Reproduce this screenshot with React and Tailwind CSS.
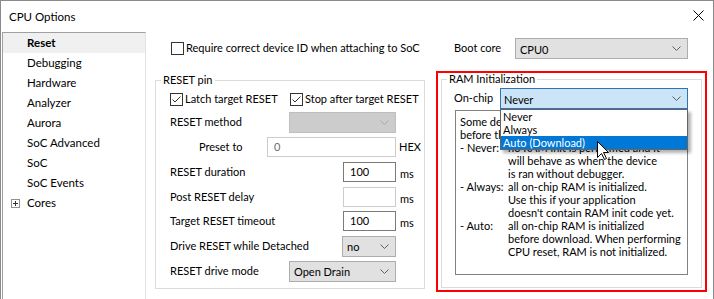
import React from "react";

const font = "font-['Lato','Liberation_Sans',sans-serif]";

const Chevron = ({ color = "#606060" }) => (
  <svg width="9" height="5" viewBox="0 0 9 5" className="shrink-0">
    <path d="M0.5 0.5 L4.5 4.5 L8.5 0.5" fill="none" stroke={color} strokeWidth="1" />
  </svg>
);

const CheckBox = ({ checked }) => (
  <div className="w-[13px] h-[13px] border border-[#333333] bg-white shrink-0 flex items-center justify-center">
    {checked && (
      <svg width="11" height="11" viewBox="0 0 11 11">
        <path d="M1.5 5.5 L4 8 L9.5 2.5" fill="none" stroke="#333333" strokeWidth="1" />
      </svg>
    )}
  </div>
);

const Combo = ({ value, className, disabled }) => (
  <div
    className={`h-[21px] flex items-center justify-between pl-[4px] pr-[6px] border ${
      disabled ? "bg-[#cccccc] border-[#bfbfbf]" : "bg-[#e1e1e1] border-[#adadad]"
    } ${className}`}
  >
    <span className="leading-[19px] pt-[1px]">{value}</span>
    <Chevron color={disabled ? "#a8a8a8" : "#606060"} />
  </div>
);

const Edit = ({ value, className, disabled, dim }) => (
  <div
    className={`h-[20px] flex items-center pl-[6px] border bg-white ${
      disabled ? "border-[#cccccc]" : "border-[#7a7a7a]"
    } ${dim ? "text-[#6d6d6d]" : ""} ${className}`}
  >
    {value}
  </div>
);

const treeItems = ["Reset", "Debugging", "Hardware", "Analyzer", "Aurora", "SoC Advanced", "SoC", "SoC Events"];

const helpLines = [
  ["", "Some devices require RAM to be"],
  ["", "before they can be used by the"],
  ["- Never:", "no RAM init is performed and it"],
  ["", "will behave as when the device"],
  ["", "is ran without debugger."],
  ["- Always:", "all on-chip RAM is initialized."],
  ["", "Use this if your application"],
  ["", "doesn't contain RAM init code yet."],
  ["- Auto:", "all on-chip RAM is initialized"],
  ["", "before download. When performing"],
  ["", "CPU reset, RAM is not initialized."],
];

export default function App() {
  return (
    <div
      className={`relative w-[714px] h-[299px] overflow-hidden whitespace-nowrap bg-white border-x border-t border-[#8a8a8a] text-[11px] text-black ${font}`}
    >
      {/* title bar */}
      <div className="h-[31px] flex items-start justify-between pl-[8px] pr-[9px]">
        <span className="leading-[14px] mt-[9px] text-[11.5px]">CPU Options</span>
        <svg width="11" height="11" viewBox="0 0 11 11" className="mt-[9px]">
          <path d="M0.5 0.5 L10.5 10.5 M10.5 0.5 L0.5 10.5" stroke="#000" strokeWidth="1" />
        </svg>
      </div>

      <div className="flex h-[267px]">
        {/* tree */}
        <div className="ml-px w-[144px] border-t border-l border-r border-t-[#a0a0a0] border-l-[#a0a0a0] border-r-[#e3e3e3] flex flex-col text-[11.5px]">
          {treeItems.map((t, i) => (
            <div
              key={t}
              className={`h-[20px] leading-[20px] pl-[24px] ${i === 0 ? "bg-[#f0f0f0] font-bold" : ""}`}
            >
              {t}
            </div>
          ))}
          <div className="h-[20px] flex items-center pl-[8px] gap-[7px]">
            <div className="w-[9px] h-[9px] border border-[#919191] flex items-center justify-center">
              <svg width="7" height="7" viewBox="0 0 7 7">
                <path d="M1 3.5 H6 M3.5 1 V6" stroke="#333" strokeWidth="1" />
              </svg>
            </div>
            <span>Cores</span>
          </div>
        </div>

        {/* left column */}
        <div className="ml-[9px] w-[270px] flex flex-col">
          <div className="mt-[8px] h-[16px] flex items-center pl-[16px] gap-[2px]">
            <CheckBox />
            <span>Require correct device ID when attaching to SoC</span>
          </div>

          <fieldset className="mt-[17px] h-[216px] border border-[#dcdcdc] px-0 flex flex-col">
            <legend className="ml-[5px] px-[2px] leading-[14px]">RESET pin</legend>
            <div className="mt-[4px] h-[16px] flex items-center pl-[14px]">
              <div className="w-[120px] flex items-center gap-[2px]">
                <CheckBox checked />
                <span>Latch target RESET</span>
              </div>
              <div className="flex items-center gap-[2px]">
                <CheckBox checked />
                <span>Stop after target RESET</span>
              </div>
            </div>

            <div className="mt-[5px] flex items-center pl-[14px]">
              <span className="w-[119px]">RESET method</span>
              <Combo value="" disabled className="w-[107px]" />
            </div>
            <div className="mt-[4px] flex items-center pl-[14px]">
              <span className="w-[97px] pl-[29px]">Preset to</span>
              <Edit value="0" disabled dim className="w-[129px]" />
              <span className="ml-[3px]">HEX</span>
            </div>
            <div className="mt-[5px] flex items-center pl-[14px]">
              <span className="w-[173px]">RESET duration</span>
              <Edit value="100" className="w-[53px]" />
              <span className="ml-[4px] mt-[4px]">ms</span>
            </div>
            <div className="mt-[4px] flex items-center pl-[14px]">
              <span className="w-[173px]">Post RESET delay</span>
              <Edit value="" disabled className="w-[53px]" />
              <span className="ml-[4px] mt-[4px]">ms</span>
            </div>
            <div className="mt-[4px] flex items-center pl-[14px]">
              <span className="w-[173px]">Target RESET timeout</span>
              <Edit value="100" className="w-[53px]" />
              <span className="ml-[4px] mt-[4px]">ms</span>
            </div>
            <div className="mt-[4px] flex items-center pl-[14px]">
              <span className="w-[172px]">Drive RESET while Detached</span>
              <Combo value="no" className="w-[54px]" />
            </div>
            <div className="mt-[4px] flex items-center pl-[14px]">
              <span className="w-[119px]">RESET drive mode</span>
              <Combo value="Open Drain" className="w-[107px]" />
            </div>
          </fieldset>
        </div>

        {/* right column */}
        <div className="ml-[11px] flex flex-col">
          <div className="mt-[6px] flex items-center pl-[18px]">
            <span className="w-[61px]">Boot core</span>
            <Combo value="CPU0" className="w-[173px]" />
          </div>

          <div className="mt-[12px] w-[271px] h-[221px] border-2 border-[#ff0000] px-[3px] pb-[3px]">
            <fieldset className="h-[215px] border border-[#dcdcdc] px-0 flex flex-col">
              <legend className="ml-[5px] px-[2px] leading-[12px]">RAM Initialization</legend>
              <div className="mt-[3px] flex items-center pl-[12px]">
                <span className="w-[46px]">On-chip</span>
                <div className="relative w-[188px]">
                  <div className="h-[21px] flex items-center justify-between pl-[3px] pr-[6px] border border-[#2f75b5] bg-[#cce4f7]">
                    <span className="leading-[19px] pt-[1px]">Never</span>
                    <Chevron />
                  </div>
                  <div className="absolute z-10 left-0 top-full w-[188px] border border-[#646464] bg-white shadow-[3px_3px_3px_rgba(0,0,0,0.3)]">
                    <div className="h-[13px] leading-[13px] pl-[2px]">Never</div>
                    <div className="h-[13px] leading-[13px] pl-[2px]">Always</div>
                    <div className="h-[13px] leading-[13px] pl-[2px] bg-[#0078d7] text-white">Auto (Download)</div>
                  </div>
                </div>
              </div>
              <div className="mt-[1px] ml-[13px] w-[233px] h-[165px] border border-[#828282] pt-[4px] pl-[4px] overflow-hidden">
                {helpLines.map(([a, b], i) => (
                  <div key={i} className="flex h-[13px] leading-[13px]">
                    {a || i > 1 ? <span className="w-[48px] shrink-0">{a}</span> : null}
                    <span>{b}</span>
                  </div>
                ))}
              </div>
            </fieldset>
          </div>
        </div>
      </div>

      {/* mouse pointer */}
      <svg width="13" height="20" viewBox="0 0 13 20" className="absolute z-20 left-[596px] top-[140px]">
        <path
          d="M0.5 0.5 V16.5 L4.5 12.5 L7.5 18.5 L9.5 17.5 L6.5 11.5 H11.5 Z"
          fill="#fff"
          stroke="#000"
          strokeWidth="1"
          strokeLinejoin="miter"
        />
      </svg>
    </div>
  );
}
